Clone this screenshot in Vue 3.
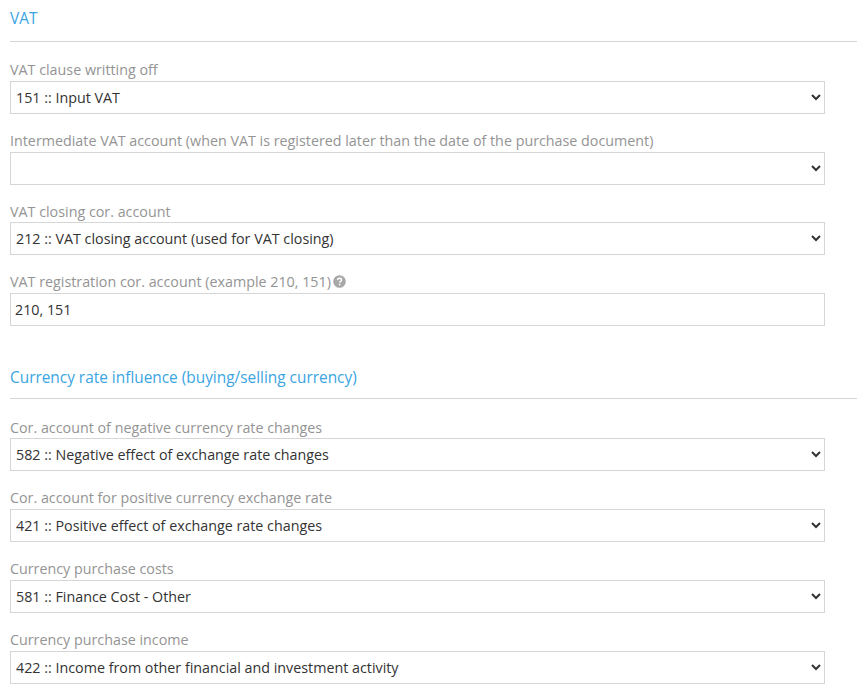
<script setup>
const vat = [
  { label: 'VAT clause writting off', value: '151 :: Input VAT' },
  { label: 'Intermediate VAT account (when VAT is registered later than the date of the purchase document)', value: '' },
  { label: 'VAT closing cor. account', value: '212 :: VAT closing account (used for VAT closing)' }
]
const currency = [
  { label: 'Cor. account of negative currency rate changes', value: '582 :: Negative effect of exchange rate changes' },
  { label: 'Cor. account for positive currency exchange rate', value: '421 :: Positive effect of exchange rate changes' },
  { label: 'Currency purchase costs', value: '581 :: Finance Cost - Other' },
  { label: 'Currency purchase income', value: '422 :: Income from other financial and investment activity' }
]
</script>

<template>
  <div class="page">
    <section class="section">
      <h3 class="heading">VAT</h3>
      <div class="field" v-for="f in vat" :key="f.label">
        <label class="label">{{ f.label }}</label>
        <select class="control"><option>{{ f.value }}</option></select>
      </div>
      <div class="field">
        <label class="label">VAT registration cor. account (example 210, 151)<svg class="help" viewBox="0 0 13 13" width="13" height="13" aria-hidden="true">
            <circle cx="6.500" cy="6.500" r="6.300" fill="#a8a8a8" />
            <path d="M4.500 5.100C4.600 3.900 5.400 3.300 6.500 3.300c1.200 0 2 .7 2 1.700 0 .9-.5 1.300-1.100 1.600-.4.300-.6.500-.6 1v.2" fill="none" stroke="#fff" stroke-width="1.400" />
            <rect x="5.900" y="8.800" width="1.600" height="1.500" fill="#fff" />
          </svg></label>
        <input class="control text" value="210, 151" />
      </div>
    </section>
    <section class="section second">
      <h3 class="heading">Currency rate influence (buying/selling currency)</h3>
      <div class="field" v-for="f in currency" :key="f.label">
        <label class="label">{{ f.label }}</label>
        <select class="control"><option>{{ f.value }}</option></select>
      </div>
    </section>
  </div>
</template>

<style scoped>
.page {
  padding: 9px 0 0 10px;
  font-family: "Open Sans", sans-serif;
  font-size: 14.3px;
}
.second {
  margin-top: 42.3px;
}
.second .heading {
  padding-bottom: 10px;
}
.heading {
  margin: 0 0 19.3px;
  padding-bottom: 12px;
  border-bottom: 1px solid #d6d6d6;
  font-size: 15.4px;
  font-weight: 400;
  line-height: 20px;
  color: #3aa5e2;
}
.field {
  display: flex;
  flex-direction: column;
  margin-bottom: 18px;
}
.label {
  font-size: 14.3px;
  line-height: 17.7px;
  margin-bottom: 2px;
  color: #949494;
}
.help {
  margin-left: 2px;
  vertical-align: -1px;
}
.control {
  box-sizing: border-box;
  width: 815px;
  height: 33px;
  padding: 0 1px;
  border: 1px solid #d6d6d6;
  border-radius: 0;
  background: #fff;
  font-family: "Open Sans", sans-serif;
  font-size: 14.3px;
  color: #333;
  outline: none;
}
.text {
  padding: 0 4px;
}
</style>
